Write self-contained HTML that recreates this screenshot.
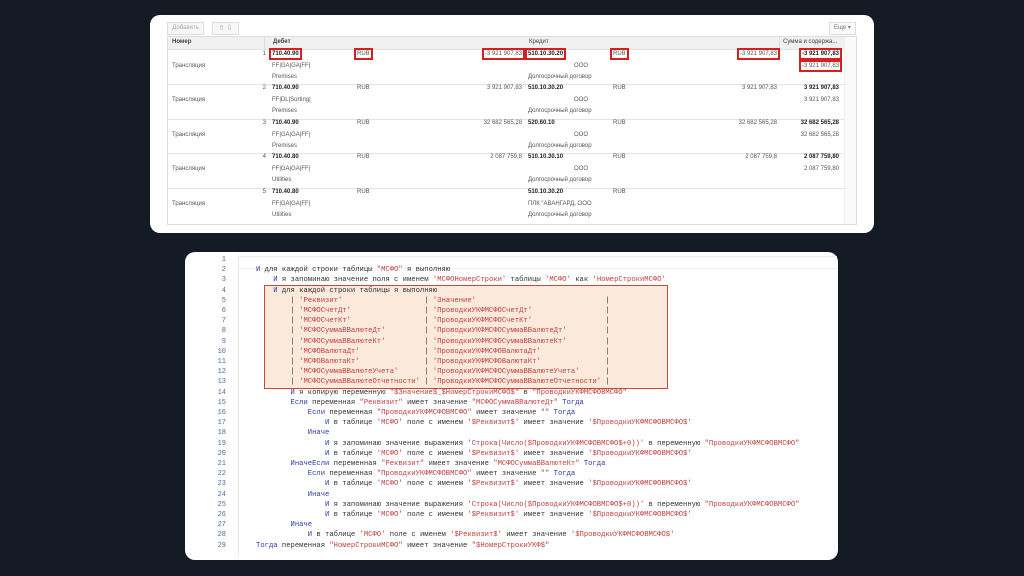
<!DOCTYPE html>
<html><head><meta charset="utf-8">
<style>
body{margin:0;width:1024px;height:576px;background:#151b24;position:relative;overflow:hidden;font-family:"Liberation Sans",sans-serif}
.card{position:absolute;background:#fff;border-radius:10px}
.t{position:absolute;font-size:6px;color:#555;white-space:nowrap;line-height:8px}
.b{font-weight:bold;color:#222}
.r{text-align:right}
.red{outline:2px solid #d62020;outline-offset:1px}
.hl{position:absolute;left:0;right:0;height:1px;background:#e4e4e4}
pre{margin:0;position:absolute;font-family:"Liberation Mono",monospace;font-size:7.2px;line-height:10.21px;color:#333}
.k{color:#2d3aa8}.s{color:#c0403f}
.ln{position:absolute;left:200px;width:26px;text-align:right;font-family:"Liberation Mono",monospace;font-size:7px;line-height:10.21px;color:#4b6aa0}
</style></head><body>
<div class="card" style="left:150px;top:15px;width:724px;height:218px"></div>
<div style="position:absolute;left:167px;top:22px;width:35px;height:11px;border:1px solid #ddd;background:#f7f7f7;font-size:6px;color:#aaa;line-height:11px;text-align:center">Добавить</div>
<div style="position:absolute;left:212px;top:22px;width:25px;height:11px;border:1px solid #ddd;background:#f7f7f7;font-size:7px;color:#aaa;line-height:11px;text-align:center">⇧ ⇩</div>
<div style="position:absolute;left:829px;top:22px;width:25px;height:11px;border:1px solid #ddd;background:#fafafa;font-size:6px;color:#777;line-height:11px;text-align:center">Еще ▾</div>
<div style="position:absolute;left:167px;top:36px;width:688px;height:187px;border:1px solid #ddd;overflow:hidden">
 <div style="position:absolute;left:0;top:0;width:688px;height:12px;background:#f0f0f0"></div>
 <div class="hl" style="top:12px"></div>
 <div class="hl" style="top:47px"></div>
 <div class="hl" style="top:82px"></div>
 <div class="hl" style="top:116px"></div>
 <div class="hl" style="top:151px"></div>
 <div style="position:absolute;left:96px;top:0;width:1px;height:12px;background:#ddd"></div>
 <div style="position:absolute;left:611px;top:0;width:1px;height:12px;background:#ddd"></div>
 <div style="position:absolute;left:676px;top:0;width:12px;height:187px;background:#fafafa;border-left:1px solid #eee"></div>
</div>
<div class="t b" style="left:172px;top:38px;color:#444">Номер</div>
<div class="t b" style="left:273px;top:38px;color:#444">Дебет</div>
<div class="t" style="left:529px;top:38px;color:#444">Кредит</div>
<div class="t" style="left:783px;top:38px;color:#444">Сумма и содержа...</div>

<div id="rows"></div>
<script>
var rows=[
 ["1","710.40.90","FF|GA|GA|FF|","Premises","-3 921 907,83","510.10.30.20","ООО","-3 921 907,83","-3 921 907,83","-3 921 907,83",true],
 ["2","710.40.90","FF|DL|Sorting|","Premises","3 921 907,83","510.10.30.20","ООО","3 921 907,83","3 921 907,83","3 921 907,83",false],
 ["3","710.40.90","FF|GA|GA|FF|","Premises","32 682 565,28","520.60.10","ООО","32 682 565,28","32 682 565,28","32 682 565,28",false],
 ["4","710.40.80","FF|GA|GA|FF|","Utilities","2 087 759,8","510.10.30.10","ООО","2 087 759,8","2 087 759,80","2 087 759,80",false],
 ["5","710.40.80","FF|GA|GA|FF|","Utilities","","510.10.30.20","ПЛК \"АВАНГАРД, ООО","","","",false]];
var h="",tops=[50,84,119,153,188];
function w(t,red){return red?'<span class="red">'+t+'</span>':t;}
rows.forEach(function(r,i){var y=tops[i],c=r[10];
h+='<div class="t" style="left:172px;top:'+(y+12)+'px">Трансляция</div>';
h+='<div class="t r" style="left:250px;width:16px;top:'+y+'px">'+r[0]+'</div>';
h+='<div class="t b" style="left:272px;top:'+y+'px">'+w(r[1],c)+'</div>';
h+='<div class="t" style="left:272px;top:'+(y+12)+'px">'+r[2]+'</div>';
h+='<div class="t" style="left:272px;top:'+(y+23)+'px">'+r[3]+'</div>';
h+='<div class="t" style="left:357px;top:'+y+'px">'+w('RUB',c)+'</div>';
h+='<div class="t r" style="left:460px;width:62px;top:'+y+'px">'+w(r[4],c)+'</div>';
h+='<div class="t b" style="left:528px;top:'+y+'px">'+w(r[5],c)+'</div>';
h+='<div class="t" style="left:'+(i==4?528:574)+'px;top:'+(y+12)+'px">'+r[6]+'</div>';
h+='<div class="t" style="left:528px;top:'+(y+23)+'px">Долгосрочный договор</div>';
h+='<div class="t" style="left:613px;top:'+y+'px">'+w('RUB',c)+'</div>';
h+='<div class="t r" style="left:715px;width:62px;top:'+y+'px">'+w(r[7],c)+'</div>';
h+='<div class="t b r" style="left:779px;width:60px;top:'+y+'px">'+w(r[8],c)+'</div>';
h+='<div class="t r" style="left:779px;width:60px;top:'+(y+12)+'px">'+w(r[9],c)+'</div>';});
document.getElementById("rows").innerHTML=h;
</script>

<div class="card" style="left:185px;top:252px;width:653px;height:308px"></div>
<div style="position:absolute;left:238px;top:255px;width:1px;height:300px;background:#e6e6e6"></div>
<div style="position:absolute;left:239px;top:256px;width:598px;height:11px;border-top:1px solid #eee;border-bottom:1px solid #eee"></div>
<div style="position:absolute;left:264px;top:285px;width:402px;height:102px;background:#fbe9dc;border:1.5px solid #c8483a"></div>
<div class="ln" style="top:255px">1<br>2<br>3<br>4<br>5<br>6<br>7<br>8<br>9<br>10<br>11<br>12<br>13<br>14<br>15<br>16<br>17<br>18<br>19<br>20<br>21<br>22<br>23<br>24<br>25<br>26<br>27<br>28<br>29</div>
<pre style="left:256px;top:255px">

<span class="k">И</span> для каждой строки таблицы <span class="s">"МСФО"</span> я выполняю
    <span class="k">И</span> я запоминаю значение поля с именем <span class="s">'МСФОНомерСтроки'</span> таблицы <span class="s">'МСФО'</span> как <span class="s">'НомерСтрокиМСФО'</span>
    <span class="k">И</span> для каждой строки таблицы я выполняю
<span id="tbl"></span>        <span class="k">И</span> я копирую переменную <span class="s">"$Значение$_$НомерСтрокиМСФО$"</span> в <span class="s">"ПроводкиУКФМСФОВМСФО"</span>
        <span class="k">Если</span> переменная <span class="s">"Реквизит"</span> имеет значение <span class="s">"МСФОСуммаВВалютеДт"</span> <span class="k">Тогда</span>
            <span class="k">Если</span> переменная <span class="s">"ПроводкиУКФМСФОВМСФО"</span> имеет значение <span class="s">""</span> <span class="k">Тогда</span>
                <span class="k">И</span> в таблице <span class="s">'МСФО'</span> поле с именем <span class="s">'$Реквизит$'</span> имеет значение <span class="s">'$ПроводкиУКФМСФОВМСФО$'</span>
            <span class="k">Иначе</span>
                <span class="k">И</span> я запоминаю значение выражения <span class="s">'Строка(Число($ПроводкиУКФМСФОВМСФО$+0))'</span> в переменную <span class="s">"ПроводкиУКФМСФОВМСФО"</span>
                <span class="k">И</span> в таблице <span class="s">'МСФО'</span> поле с именем <span class="s">'$Реквизит$'</span> имеет значение <span class="s">'$ПроводкиУКФМСФОВМСФО$'</span>
        <span class="k">ИначеЕсли</span> переменная <span class="s">"Реквизит"</span> имеет значение <span class="s">"МСФОСуммаВВалютеКт"</span> <span class="k">Тогда</span>
            <span class="k">Если</span> переменная <span class="s">"ПроводкиУКФМСФОВМСФО"</span> имеет значение <span class="s">""</span> <span class="k">Тогда</span>
                <span class="k">И</span> в таблице <span class="s">'МСФО'</span> поле с именем <span class="s">'$Реквизит$'</span> имеет значение <span class="s">'$ПроводкиУКФМСФОВМСФО$'</span>
            <span class="k">Иначе</span>
                <span class="k">И</span> я запоминаю значение выражения <span class="s">'Строка(Число($ПроводкиУКФМСФОВМСФО$+0))'</span> в переменную <span class="s">"ПроводкиУКФМСФОВМСФО"</span>
                <span class="k">И</span> в таблице <span class="s">'МСФО'</span> поле с именем <span class="s">'$Реквизит$'</span> имеет значение <span class="s">'$ПроводкиУКФМСФОВМСФО$'</span>
        <span class="k">Иначе</span>
            <span class="k">И</span> в таблице <span class="s">'МСФО'</span> поле с именем <span class="s">'$Реквизит$'</span> имеет значение <span class="s">'$ПроводкиУКФМСФОВМСФО$'</span>
<span class="k">Тогда</span> переменная <span class="s">"НомерСтрокиМСФО"</span> имеет значение <span class="s">"$НомерСтрокиУКФ$"</span>
</pre>
<script>
var L=[["Реквизит","Значение"],["МСФОСчетДт","ПроводкиУКФМСФОСчетДт"],["МСФОСчетКт","ПроводкиУКФМСФОСчетКт"],["МСФОСуммаВВалютеДт","ПроводкиУКФМСФОСуммаВВалютеДт"],["МСФОСуммаВВалютеКт","ПроводкиУКФМСФОСуммаВВалютеКт"],["МСФОВалютаДт","ПроводкиУКФМСФОВалютаДт"],["МСФОВалютаКт","ПроводкиУКФМСФОВалютаКт"],["МСФОСуммаВВалютеУчета","ПроводкиУКФМСФОСуммаВВалютеУчета"],["МСФОСуммаВВалютеОтчетности","ПроводкиУКФМСФОСуммаВВалютеОтчетности"]];
function pad(s,n){s="'"+s+"'";var p="";for(var i=s.length;i<n;i++)p+=" ";return '<span class="s">'+s+'</span>'+p;}
var o="";L.forEach(function(a){o+="        | "+pad(a[0],28)+" | "+pad(a[1],39)+" |\n";});
document.getElementById("tbl").innerHTML=o;
</script>
</body></html>
